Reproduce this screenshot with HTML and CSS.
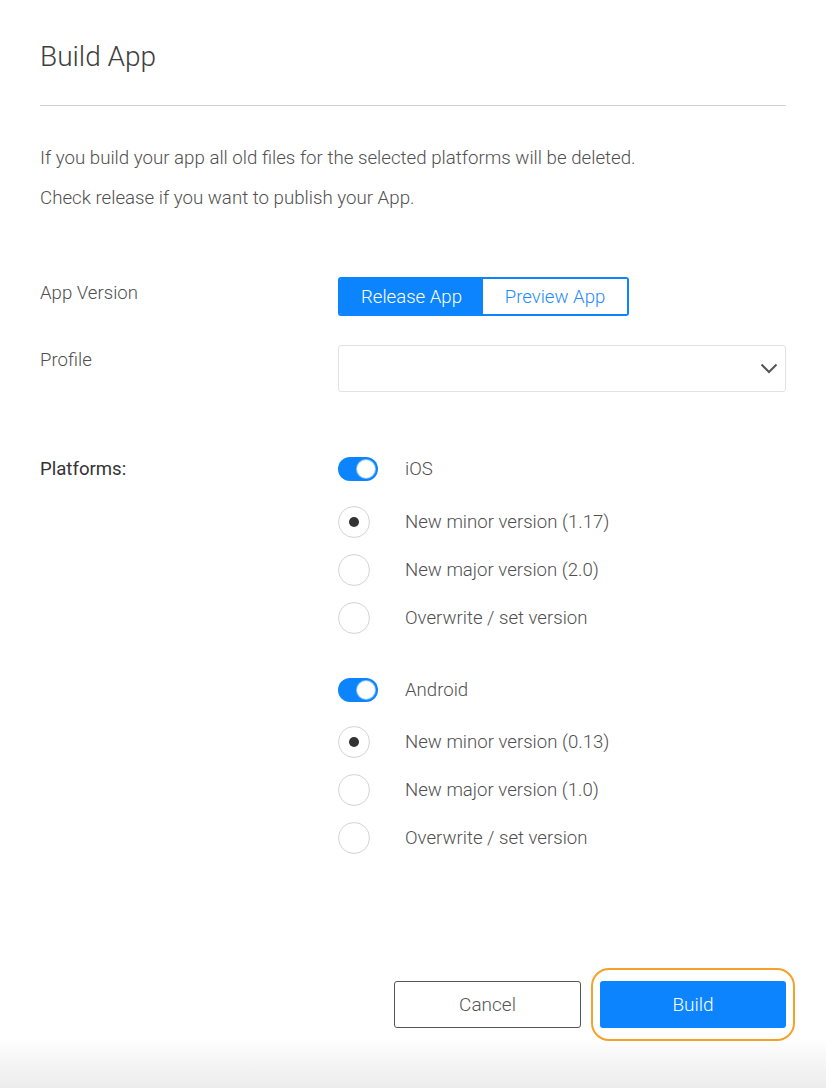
FILE: index.html
```html
<!DOCTYPE html>
<html>
<head>
<meta charset="utf-8">
<link rel="stylesheet" href="styles.css">
</head>
<body>
<div class="dialog">
  <h1 class="title">Build App</h1>
  <hr class="divider">
  <p class="intro">If you build your app all old files for the selected platforms will be deleted.</p>
  <p class="intro">Check release if you want to publish your App.</p>

  <div class="row row-version">
    <div class="label">App Version</div>
    <div class="control">
      <div class="segmented">
        <span class="seg seg-active">Release App</span>
        <span class="seg">Preview App</span>
      </div>
    </div>
  </div>

  <div class="row row-profile">
    <div class="label">Profile</div>
    <div class="control">
      <div class="select">
        <svg class="chevron" width="18" height="11" viewBox="0 0 18 11"><path d="M1.5 1.5 L9 9 L16.5 1.5" fill="none" stroke="#555" stroke-width="2"/></svg>
      </div>
    </div>
  </div>

  <div class="row row-platforms">
    <div class="label label-strong">Platforms:</div>
    <div class="control">
      <div class="platform">
        <div class="opt opt-toggle"><span class="toggle"><span class="knob"></span></span><span class="opt-text">iOS</span></div>
        <div class="opt"><span class="radio radio-on"></span><span class="opt-text">New minor version (1.17)</span></div>
        <div class="opt"><span class="radio"></span><span class="opt-text">New major version (2.0)</span></div>
        <div class="opt"><span class="radio"></span><span class="opt-text">Overwrite / set version</span></div>
      </div>
      <div class="platform">
        <div class="opt opt-toggle"><span class="toggle"><span class="knob"></span></span><span class="opt-text">Android</span></div>
        <div class="opt"><span class="radio radio-on"></span><span class="opt-text">New minor version (0.13)</span></div>
        <div class="opt"><span class="radio"></span><span class="opt-text">New major version (1.0)</span></div>
        <div class="opt"><span class="radio"></span><span class="opt-text">Overwrite / set version</span></div>
      </div>
    </div>
  </div>

  <div class="actions">
    <button class="btn btn-cancel">Cancel</button>
    <span class="focus-ring"><button class="btn btn-build">Build</button></span>
  </div>
</div>
</body>
</html>
```
FILE: styles.css
```css
html, body {
  margin: 0;
  padding: 0;
}
body {
  width: 826px;
  height: 1088px;
  font-family: Roboto, "Liberation Sans", sans-serif;
  font-weight: 300;
  color: #505050;
  display: flex;
  flex-direction: column;
  overflow: hidden;
  background: linear-gradient(to bottom, #fff 0, #fff 1038px, #f6f6f6 1060px, #ececec 1088px);
}
.dialog {
  padding: 0 40px;
  flex: 1;
  display: flex;
  flex-direction: column;
}
.title {
  margin: 39px 0 0;
  font-size: 28px;
  font-weight: 300;
  line-height: 36px;
  color: #3e3e3e;
}
.divider {
  margin: 30px 0 0;
  border: 0;
  border-top: 1px solid #d0d0d0;
  height: 0;
}
.intro {
  margin: 0;
  font-size: 18.7px;
  line-height: 40px;
  color: #505050;
}
.divider + .intro {
  margin-top: 32px;
}
.row {
  display: grid;
  grid-template-columns: 298px 1fr;
}
.label {
  font-size: 18.6px;
  line-height: 24px;
  color: #505050;
}
.label-strong {
  font-weight: 400;
  color: #333;
}
.row-version {
  margin-top: 59px;
}
.row-version .label {
  padding-top: 4px;
}
.segmented {
  display: inline-flex;
  border: 2px solid #0c84fe;
  border-radius: 3px;
  overflow: hidden;
  height: 35px;
}
.seg {
  width: 144px;
  display: flex;
  align-items: center;
  justify-content: center;
  font-size: 18.6px;
  color: #1f8bfe;
  background: #fff;
}
.seg-active {
  background: #0c84fe;
  color: #fff;
  width: 143px;
}
.row-profile {
  margin-top: 29px;
}
.row-profile .label {
  padding-top: 3px;
}
.select {
  height: 45px;
  border: 1px solid #e2e2e2;
  border-radius: 3px;
  display: flex;
  align-items: center;
  justify-content: flex-end;
  padding-right: 7px;
}
.row-platforms {
  margin-top: 65px;
}
.row-platforms .label {
  line-height: 24px;
}
.platform + .platform {
  margin-top: 36px;
}
.opt {
  display: flex;
  align-items: center;
  height: 48px;
}
.opt-toggle {
  height: 24px;
  margin-bottom: 17px;
}
.platform + .platform .opt-toggle {
  margin-bottom: 16px;
}
.opt-text {
  margin-left: 35px;
  font-size: 18.6px;
  color: #505050;
}
.toggle {
  width: 40px;
  height: 24px;
  border-radius: 12px;
  background: #0c84fe;
  position: relative;
  flex: none;
}
.opt-toggle .opt-text {
  margin-left: 27px;
}
.knob {
  position: absolute;
  right: 3px;
  top: 3px;
  width: 18px;
  height: 18px;
  border-radius: 50%;
  background: #fff;
  box-shadow: 0 0 0 1px rgba(255,255,255,0.5);
}
.radio {
  width: 30px;
  height: 30px;
  border: 1px solid #d4d4d4;
  border-radius: 50%;
  flex: none;
  position: relative;
}
.radio-on::after {
  content: "";
  position: absolute;
  left: 10px;
  top: 10px;
  width: 10px;
  height: 10px;
  border-radius: 50%;
  background: #333;
}
.actions {
  margin-top: auto;
  margin-bottom: 60px;
  display: flex;
  justify-content: flex-end;
  align-items: center;
  gap: 10px;
}
.btn {
  font-family: Roboto, "Liberation Sans", sans-serif;
  font-weight: 300;
  font-size: 19px;
  height: 47px;
  border-radius: 3px;
  cursor: pointer;
}
.btn-cancel {
  width: 187px;
  background: #fff;
  color: #555;
  border: 1px solid #555;
}
.focus-ring {
  display: inline-flex;
  padding: 11px 7px;
  margin: -13px -9px -13px 0;
  border: 2.5px solid #f5a12a;
  border-radius: 18px;
}
.btn-build {
  width: 186px;
  background: #0c84fe;
  color: #fff;
  border: 0;
}
```
